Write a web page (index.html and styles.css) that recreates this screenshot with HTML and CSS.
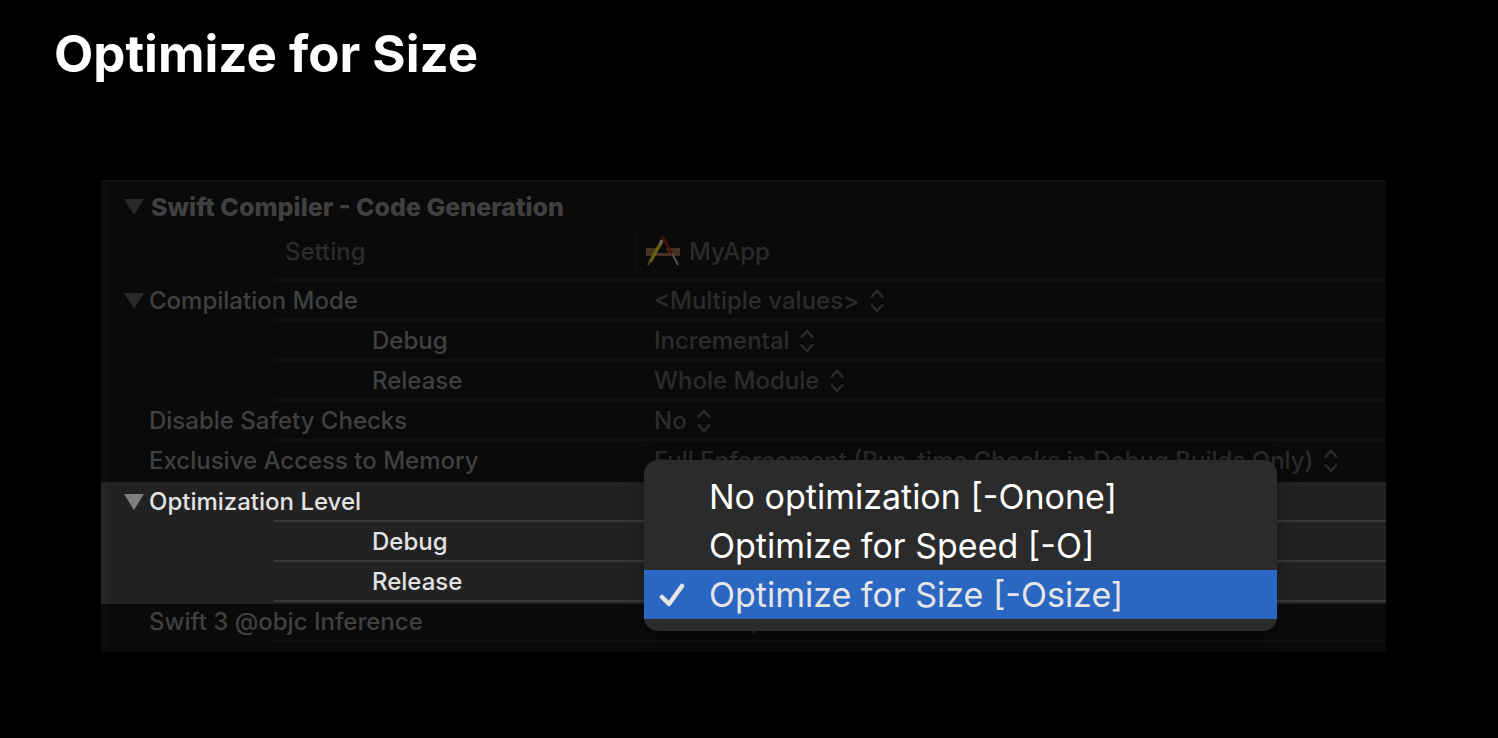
FILE: index.html
```html
<!DOCTYPE html>
<html lang="en">
<head>
<meta charset="utf-8">
<title>Optimize for Size</title>
<link rel="stylesheet" href="styles.css">
</head>
<body>
<svg class="symbols" aria-hidden="true">
  <symbol id="chevrons" viewBox="0 0 16 24"><path d="M2 8.500 8 2l6 6.500M2 15.500 8 22l6-6.500" fill="none" stroke="currentColor" stroke-width="2.500"/></symbol>
  <symbol id="triangle" viewBox="0 0 20 16"><path d="M0 0h20L10 16z" fill="currentColor"/></symbol>
</svg>
<main class="slide">
  <h1 class="title">Optimize for Size</h1>
  <section class="panel">
    <h2 class="group"><button class="disclosure" aria-label="Toggle code generation"><svg><use href="#triangle"/></svg></button>Swift Compiler - Code Generation</h2>
    <table class="settings">
      <thead>
        <tr class="row head">
          <th class="name setting">Setting</th>
          <th class="value"><span class="target">
            <svg class="app-icon" viewBox="0 0 36 32" aria-hidden="true">
              <path d="M1 12h34v8H1z" fill="#43301f"/>
              <path d="M1 14h34M1 18h34" stroke="#4d3827" stroke-width="1"/>
              <path d="M11 17 18 8 24 17z" fill="#0a0a0a"/>
              <path d="M17 0 29 21" stroke="#481009" stroke-width="2.500"/>
              <path d="M27 17 33 29" stroke="#55504d" stroke-width="2"/>
              <path d="M17 5 5 26" stroke="#686010" stroke-width="3.500"/>
              <path d="M17 4 15 8" stroke="#66605c" stroke-width="3"/>
              <path d="M6 23 3 29" stroke="#59452a" stroke-width="2"/>
            </svg>MyApp</span></th>
        </tr>
      </thead>
      <tbody>
        <tr class="row">
          <th class="name"><span class="label"><button class="disclosure" aria-label="Toggle compilation mode"><svg><use href="#triangle"/></svg></button>Compilation Mode</span></th>
          <td class="value"><span class="popup"><select aria-label="Compilation Mode"><option>&lt;Multiple values&gt;</option></select><svg><use href="#chevrons"/></svg></span></td>
        </tr>
        <tr class="row">
          <th class="name child">Debug</th>
          <td class="value"><span class="popup"><select aria-label="Compilation Mode, Debug"><option>Incremental</option></select><svg><use href="#chevrons"/></svg></span></td>
        </tr>
        <tr class="row">
          <th class="name child">Release</th>
          <td class="value"><span class="popup"><select aria-label="Compilation Mode, Release"><option>Whole Module</option></select><svg><use href="#chevrons"/></svg></span></td>
        </tr>
        <tr class="row">
          <th class="name">Disable Safety Checks</th>
          <td class="value"><span class="popup"><select aria-label="Disable Safety Checks"><option>No</option></select><svg><use href="#chevrons"/></svg></span></td>
        </tr>
        <tr class="row before-active">
          <th class="name">Exclusive Access to Memory</th>
          <td class="value"><span class="popup"><select aria-label="Exclusive Access to Memory"><option>Full Enforcement (Run-time Checks in Debug Builds Only)</option></select><svg><use href="#chevrons"/></svg></span></td>
        </tr>
      </tbody>
      <tbody class="active">
        <tr class="row">
          <th class="name"><span class="label"><button class="disclosure" aria-label="Toggle optimization level"><svg><use href="#triangle"/></svg></button>Optimization Level</span></th>
          <td class="value"></td>
        </tr>
        <tr class="row">
          <th class="name child">Debug</th>
          <td class="value"></td>
        </tr>
        <tr class="row last">
          <th class="name child">Release</th>
          <td class="value">
            <div class="menu" role="menu">
              <button class="item" role="menuitemradio" aria-checked="false">No optimization [-Onone]</button>
              <button class="item" role="menuitemradio" aria-checked="false">Optimize for Speed [-O]</button>
              <button class="item selected" role="menuitemradio" aria-checked="true"><svg class="check" viewBox="0 0 26 24" aria-hidden="true"><path d="M3 14l7 7L23 3" fill="none" stroke="currentColor" stroke-width="4.500" stroke-linecap="round" stroke-linejoin="round"/></svg>Optimize for Size [-Osize]</button>
            </div>
          </td>
        </tr>
      </tbody>
      <tbody>
        <tr class="row after-active">
          <th class="name">Swift 3 @objc Inference</th>
          <td class="value"><span class="popup"><select aria-label="Swift 3 @objc Inference"><option>Default</option></select><svg><use href="#chevrons"/></svg></span></td>
        </tr>
      </tbody>
    </table>
  </section>
</main>
</body>
</html>
```
FILE: styles.css
```css
* { box-sizing: border-box; }

body {
  margin: 0;
  background: #000;
  color: #404040;
  font: 500 24px/40px Inter, "Liberation Sans", sans-serif;
}

.symbols { position: absolute; width: 0; height: 0; }

button, select {
  margin: 0;
  padding: 0;
  border: 0;
  background: none;
  color: inherit;
  font: inherit;
  appearance: none;
}

.slide { padding: 20px 112px 86px 101px; }

.title {
  margin: 0 0 92px -47px;
  color: #fff;
  font-size: 51px;
  line-height: 68px;
  font-weight: 700;
}

.panel {
  padding-bottom: 10px;
  border-top: 2px solid #101010;
  background: linear-gradient(90deg, #0d0d0d 6px, #0a0a0a 6px);
}

.group {
  display: flex;
  align-items: center;
  height: 50px;
  margin: 0;
  padding-left: 23px;
  gap: 7px;
  font-size: 25px;
  font-weight: 800;
}

.disclosure { display: flex; color: #292929; }
.disclosure svg { width: 20px; height: 16px; }

.settings {
  width: 100%;
  border-collapse: collapse;
  table-layout: fixed;
}

.row {
  height: 40px;
  background: linear-gradient(#111, #111) 173px 100% / 100% 2px no-repeat;
}

.row.head { height: 49px; color: #2b2b2b; }
.row.before-active { height: 41px; background: none; }

.name, .value {
  padding: 0;
  font-weight: 500;
  text-align: left;
  white-space: nowrap;
  vertical-align: top;
}

.name { width: 535px; padding-left: 48px; }
.name.child { padding-left: 271px; }
.name.setting { padding-left: 184px; }
.value { color: #2b2b2b; padding-left: 18px; }

.label {
  display: flex;
  align-items: center;
  gap: 5px;
  margin-left: -25px;
}

.target {
  display: flex;
  align-items: center;
  gap: 8px;
  height: 40px;
  margin-left: -19px;
  padding-left: 8px;
  border-left: 2px solid #101010;
}
.app-icon { width: 36px; height: 32px; }

.popup { display: flex; align-items: center; gap: 9px; }
.popup svg { width: 16px; height: 24px; flex: none; }

.active {
  color: #e2e2e2;
  background: linear-gradient(90deg, #252525 6px, #222 6px);
}
.active .disclosure { color: #7f7f7f; }
.active .row { background-image: linear-gradient(#393939, #393939); }
.active .row.last { height: 42px; background-position: 173px 38px; }
.active .value { position: relative; }
.row.after-active { height: 38px; line-height: 36px; }

.menu {
  position: absolute;
  left: 8px;
  bottom: -27px;
  width: 633px;
  padding: 12px 0;
  border-radius: 14px;
  background: #2b2b2b;
  box-shadow: 0 4px 20px rgba(0, 0, 0, 0.3);
  color: #fff;
  font-size: 34px;
  font-weight: 400;
  line-height: 49px;
}

.item {
  display: flex;
  align-items: center;
  width: 100%;
  height: 49px;
  padding-left: 65px;
}
.item.selected {
  padding-left: 15px;
  gap: 24px;
  background: #2a67c3;
  color: #e5e5e5;
}
.check { width: 26px; height: 24px; }
```
